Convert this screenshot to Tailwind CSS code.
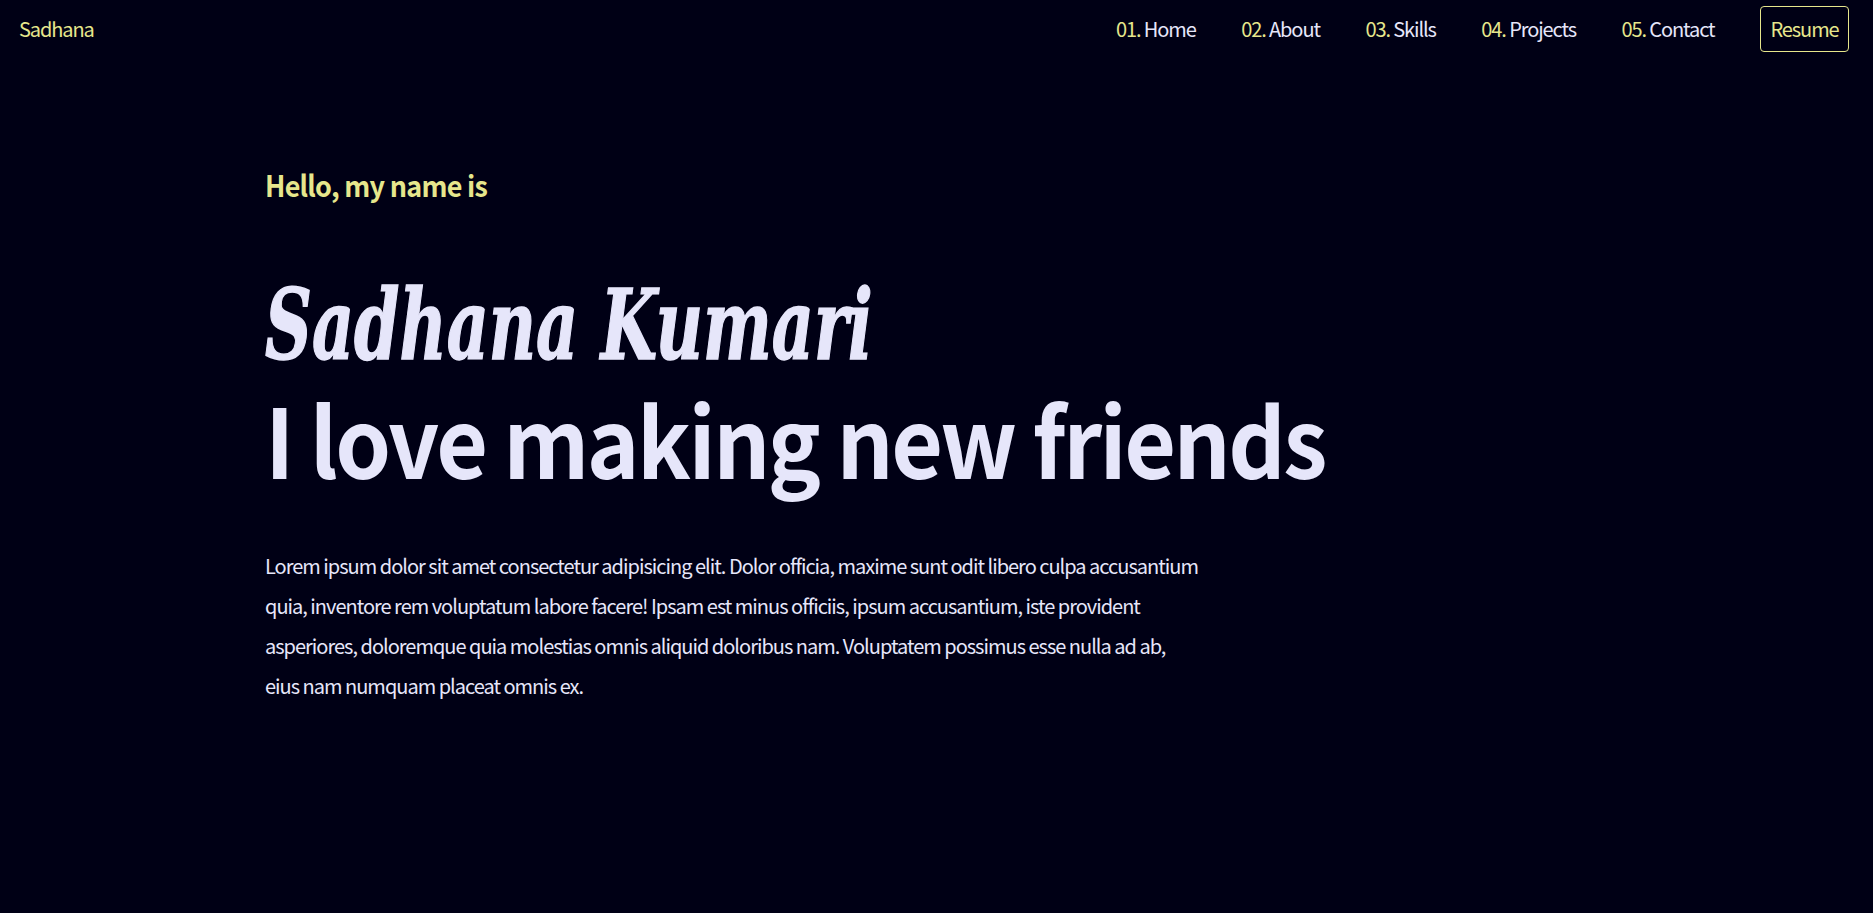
<!DOCTYPE html>
<html lang="en">
<head>
    <meta charset="UTF-8">
    <meta name="viewport" content="width=device-width, initial-scale=1.0">
    <title>Sadhana</title>
    <script src="https://cdn.jsdelivr.net/npm/@tailwindcss/browser@4"></script>
</head>
<body class="bg-[#000015] min-h-screen font-['Noto_Sans_CJK_JP',sans-serif] text-[#e6e6fa] tracking-[-1px]">
    <header class="flex items-center justify-between h-[58px] pl-[19px] pr-6 text-[20px] tracking-[-1.1px]">
        <a href="#" class="text-[#e6e68c]">Sadhana</a>
        <nav class="flex items-center gap-[45.5px]">
            <a href="#"><span class="text-[#e6e68c]">01.</span> Home</a>
            <a href="#"><span class="text-[#e6e68c]">02.</span> About</a>
            <a href="#"><span class="text-[#e6e68c]">03.</span> Skills</a>
            <a href="#"><span class="text-[#e6e68c]">04.</span> Projects</a>
            <a href="#"><span class="text-[#e6e68c]">05.</span> Contact</a>
            <button class="h-[46px] w-[89px] border border-[#e6e68c] rounded-[4px] text-[#e6e68c]">Resume</button>
        </nav>
    </header>

    <main class="pl-[265px] pt-[104px]">
        <p class="origin-left scale-x-[.93] text-[29px] leading-[44px] font-semibold tracking-[-0.8px] text-[#e6e68c]">Hello, my name is</p>
        <h1 class="mt-[45px] text-[96px] leading-[120px] font-semibold">
            <!-- no script face installed, so a squeezed serif italic stands in for the display font -->
            <span class="block origin-left scale-x-[.663] font-['DejaVu_Serif',serif] font-bold italic text-[98px] tracking-normal [-webkit-text-stroke:1.5px_#e6e6fa] pt-[14px] mb-[-7px]">Sadhana Kumari</span>
            <span class="block origin-left scale-x-[.93] tracking-[-2.7px]">I love making new friends</span>
        </h1>
        <p class="mt-[48px] w-[936px] text-[20px] leading-[40px]">Lorem ipsum dolor sit amet consectetur adipisicing elit. Dolor officia, maxime sunt odit libero culpa accusantium quia, inventore rem voluptatum labore facere! Ipsam est minus officiis, ipsum accusantium, iste provident asperiores, doloremque quia molestias omnis aliquid doloribus nam. Voluptatem possimus esse nulla ad ab, eius nam numquam placeat omnis ex.</p>
    </main>
</body>
</html>
